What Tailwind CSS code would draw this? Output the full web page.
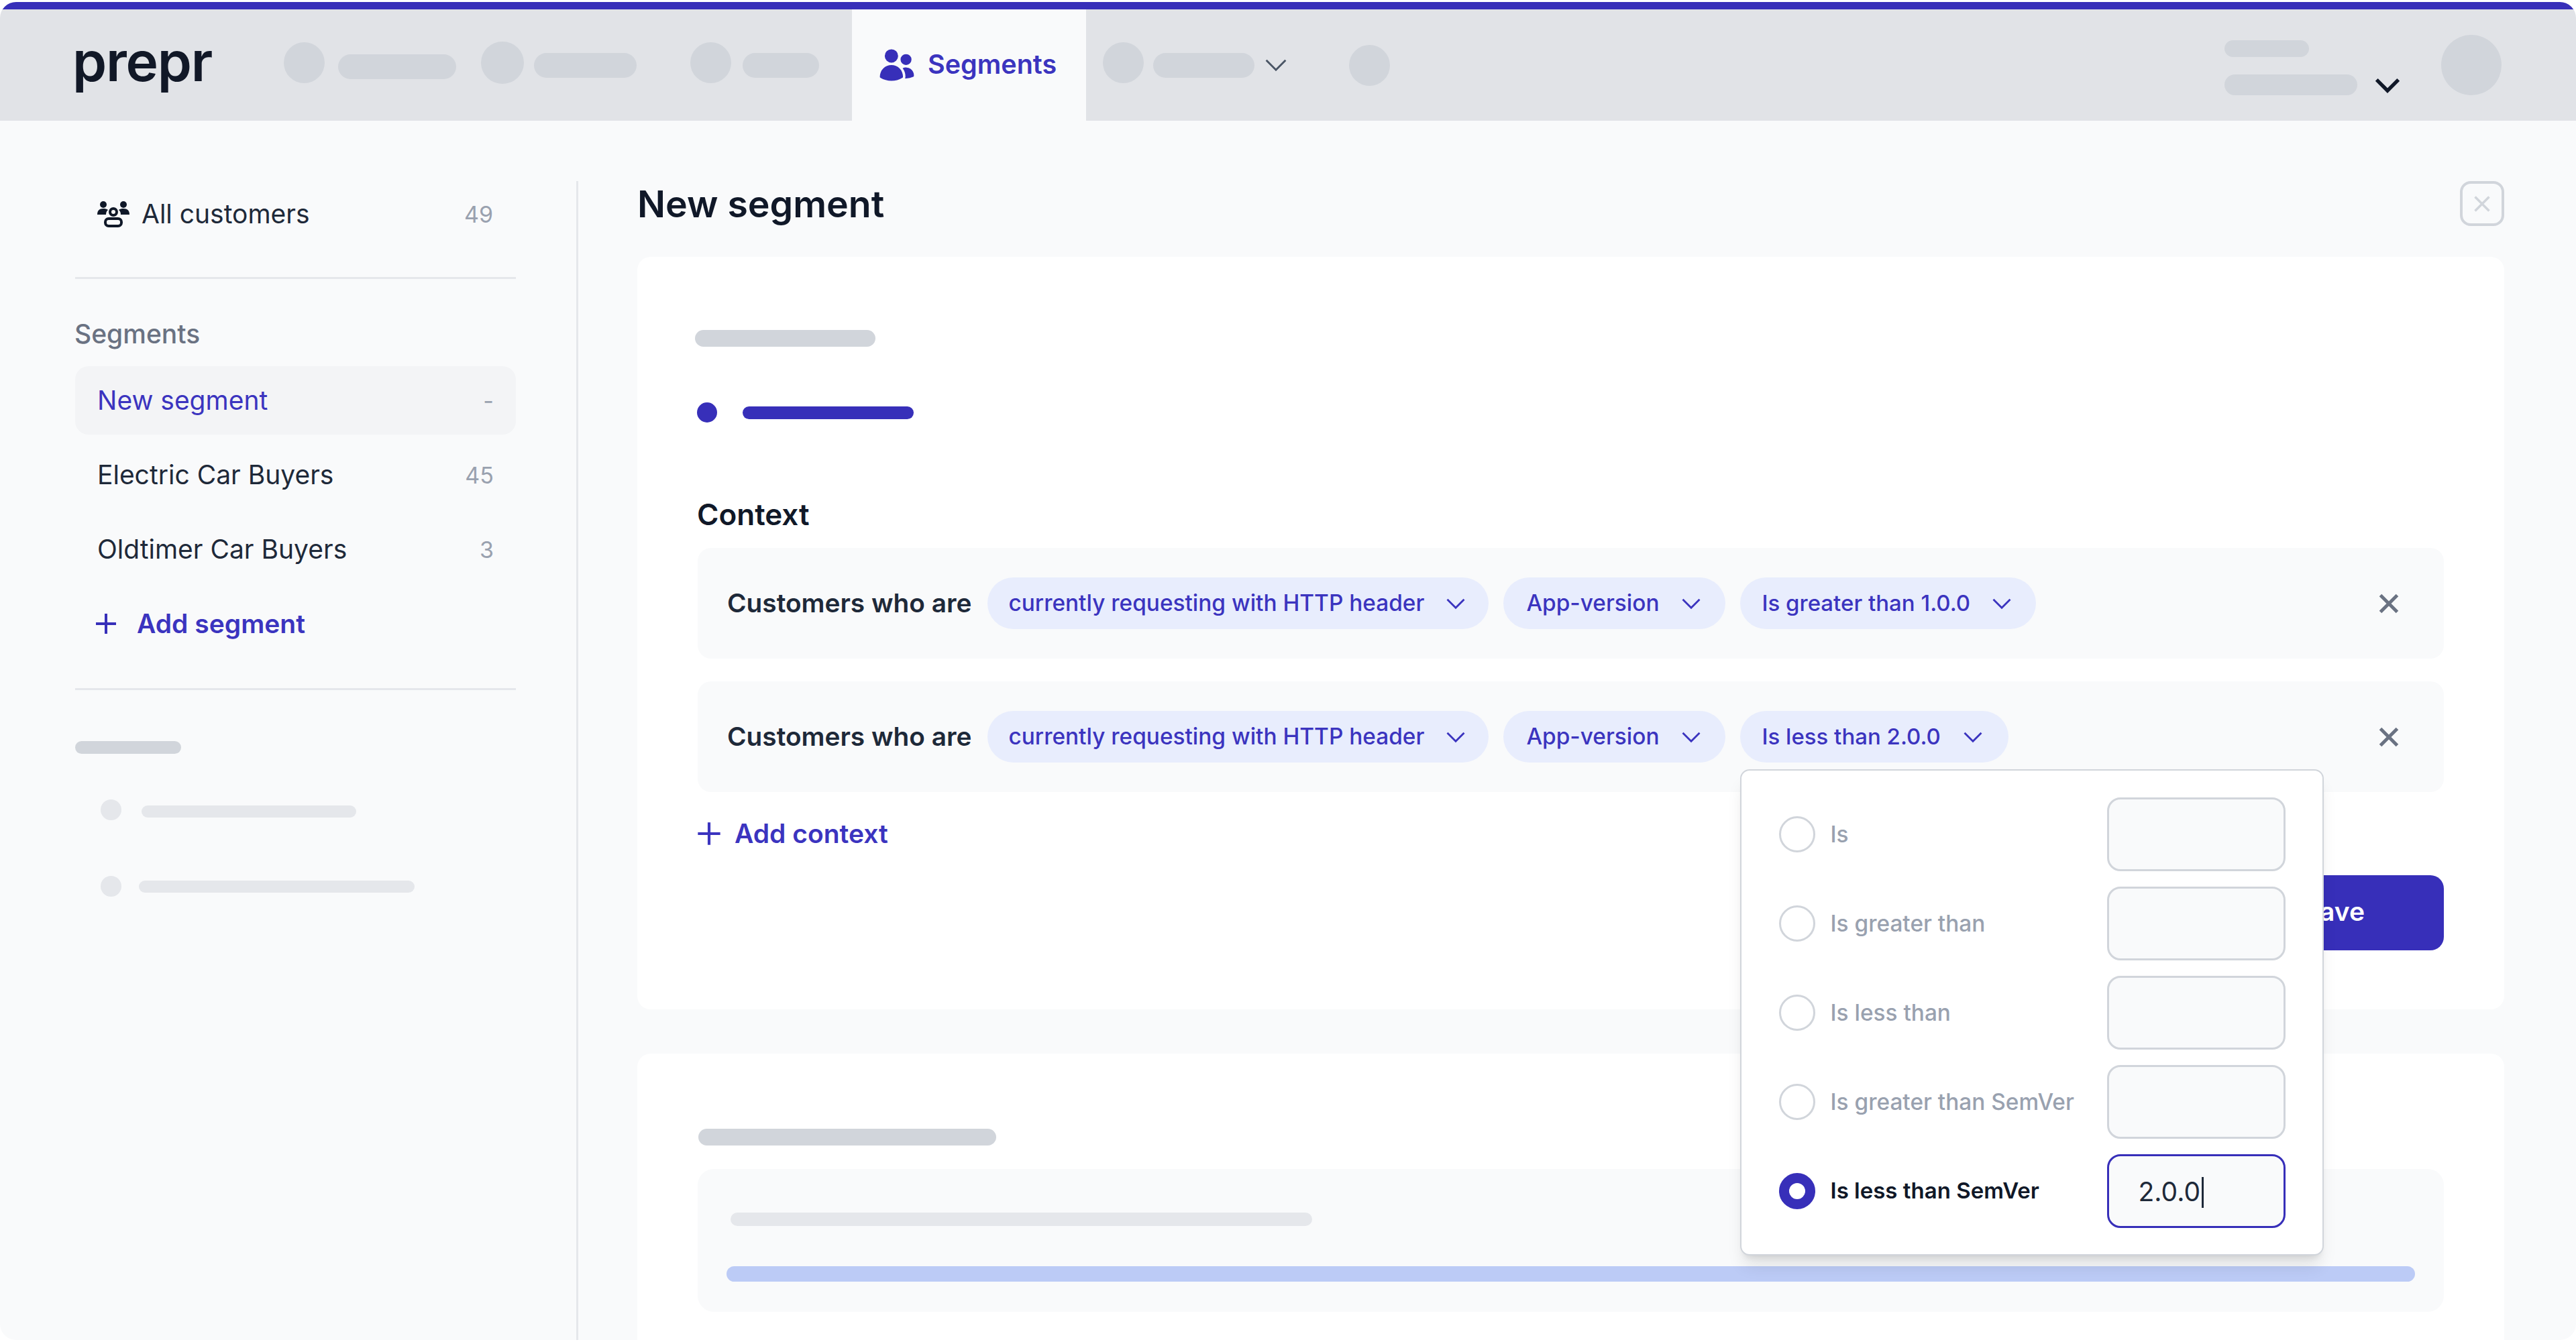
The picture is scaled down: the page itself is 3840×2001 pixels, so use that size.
<!DOCTYPE html>
<html lang="en">

<head>
  <meta charset="UTF-8" />
  <meta name="viewport" content="width=device-width, initial-scale=1" />
  <title>Prepr - New segment</title>
  <script src="https://cdn.jsdelivr.net/npm/@tailwindcss/browser@4"></script>
</head>

<body class="bg-white font-['Inter',sans-serif] text-gray-900 overflow-hidden">
  <div class="mt-[3px] h-[1995px] rounded-[24px] overflow-hidden bg-[#f9fafb] flex flex-col">
    <div class="h-[11px] shrink-0 bg-[#372fb9]"></div>

    <!-- top nav -->
    <header class="h-[166px] shrink-0 bg-[#e1e3e7] flex items-center">
      <div class="ml-[108px] w-[315px] -mt-[10px] text-[82px] leading-none font-semibold tracking-[-1.2px] text-[#111827]">prepr</div>
      <div class="-mt-[7px] w-[61px] h-[61px] rounded-full bg-[#d1d5db]"></div>
      <div class="mt-[5px] ml-[20px] w-[176px] h-[37px] rounded-full bg-[#d1d5db]"></div>
      <div class="-mt-[7px] ml-[37px] w-[64px] h-[63px] rounded-full bg-[#d1d5db]"></div>
      <div class="ml-[15px] w-[153px] h-[37px] rounded-full bg-[#d1d5db]"></div>
      <div class="-mt-[7px] ml-[80px] w-[61px] h-[61px] rounded-full bg-[#d1d5db]"></div>
      <div class="ml-[17px] w-[114px] h-[37px] rounded-full bg-[#d1d5db]"></div>

      <div class="ml-[49px] w-[349px] h-full bg-[#f9fafb] flex items-center pl-[38px] gap-[17px]">
        <svg class="w-[58px] h-[58px] text-[#372fb9]" viewBox="0 0 24 24" fill="currentColor">
          <path d="M4.5 6.375a4.125 4.125 0 1 1 8.25 0 4.125 4.125 0 0 1-8.25 0ZM14.25 8.625a3.375 3.375 0 1 1 6.75 0 3.375 3.375 0 0 1-6.75 0ZM1.5 19.125a7.125 7.125 0 0 1 14.25 0v.003l-.001.119a.75.75 0 0 1-.363.63 13.067 13.067 0 0 1-6.761 1.873c-2.472 0-4.786-.684-6.76-1.873a.75.75 0 0 1-.364-.63l-.001-.122ZM17.25 19.128l-.001.144a2.25 2.25 0 0 1-.233.96 10.088 10.088 0 0 0 5.06-1.01.75.75 0 0 0 .42-.643 4.875 4.875 0 0 0-6.957-4.611 8.586 8.586 0 0 1 1.71 5.157v.003Z" />
        </svg>
        <span class="text-[39.5px] font-semibold text-[#3b34bf]">Segments</span>
      </div>

      <div class="-mt-[7px] ml-[25px] w-[61px] h-[61px] rounded-full bg-[#d1d5db]"></div>
      <div class="ml-[14px] w-[151px] h-[37px] rounded-full bg-[#d1d5db]"></div>
      <svg class="ml-[9px] w-[46px] h-[46px] text-gray-600" viewBox="0 0 24 24" fill="none" stroke="currentColor" stroke-width="1.5">
        <path d="m19.5 8.25-7.5 7.5-7.5-7.5" />
      </svg>
      <div class="ml-[86px] w-[61px] h-[61px] rounded-full bg-[#d1d5db]"></div>

      <div class="ml-auto flex flex-col gap-[26px] mt-[8px]">
        <div class="w-[126px] h-[25px] rounded-full bg-[#d1d5db]"></div>
        <div class="w-[198px] h-[31px] rounded-full bg-[#d1d5db]"></div>
      </div>
      <svg class="ml-[19px] mt-[60px] w-[52px] h-[52px] text-gray-900" viewBox="0 0 24 24" fill="none" stroke="currentColor" stroke-width="2.5">
        <path d="m19.5 8.25-7.5 7.5-7.5-7.5" />
      </svg>
      <div class="ml-[54px] mr-[111px] w-[90px] h-[90px] rounded-full bg-[#d1d5db]"></div>
    </header>

    <div class="flex flex-1 min-h-0">
      <!-- sidebar -->
      <aside class="w-[859px] shrink-0 pl-[112px] pr-[90px] pt-[88px]">
        <div class="h-[102px] pl-[33px] pr-[34px] flex items-center justify-between">
          <div class="flex items-center gap-[18px]">
            <svg class="w-[48px] h-[40px] text-gray-900" viewBox="0 0 48 40" fill="currentColor">
              <circle cx="9" cy="6" r="5" />
              <circle cx="39" cy="6" r="5" />
              <path d="M0 21c0-6 3-9 9-9 3 0 5 .6 7 2-2 1.500-3 4-3 7Z" />
              <path d="M48 21c0-6-3-9-9-9-3 0-5 .6-7 2 2 1.500 3 4 3 7Z" />
              <circle cx="24" cy="17" r="5" fill="none" stroke="currentColor" stroke-width="4" />
              <rect x="12" y="27" width="24" height="11" rx="5" fill="none" stroke="currentColor" stroke-width="4" />
            </svg>
            <span class="text-[39px] text-gray-800">All customers</span>
          </div>
          <span class="text-[34px] text-gray-400">49</span>
        </div>

        <div class="mt-[43px] h-[3px] bg-gray-200"></div>

        <h3 class="mt-[52px] -ml-[1px] h-[60px] leading-[60px] text-[39px] font-medium text-gray-500">Segments</h3>

        <ul class="mt-[18px] flex flex-col gap-[9px]">
          <li class="h-[102px] px-[33px] rounded-[20px] bg-gray-100 flex items-center justify-between">
            <span class="text-[39px] text-[#3b34bf]">New segment</span>
            <span class="text-[34px] text-gray-400">-</span>
          </li>
          <li class="h-[102px] px-[33px] flex items-center justify-between">
            <span class="text-[39px] text-gray-800">Electric Car Buyers</span>
            <span class="text-[34px] text-gray-400">45</span>
          </li>
          <li class="h-[102px] px-[33px] flex items-center justify-between">
            <span class="text-[39px] text-gray-800">Oldtimer Car Buyers</span>
            <span class="text-[34px] text-gray-400">3</span>
          </li>
          <li class="h-[102px] pl-[22px] flex items-center gap-[22px]">
            <svg class="w-[48px] h-[48px] text-[#372fb9]" viewBox="0 0 24 24" fill="none" stroke="currentColor" stroke-width="2">
              <path d="M12 4.500v15m7.500-7.500h-15" />
            </svg>
            <span class="text-[39px] font-semibold text-[#3b34bf]">Add segment</span>
          </li>
        </ul>

        <div class="mt-[45px] h-[3px] bg-gray-200"></div>

        <div class="mt-[76px] w-[158px] h-[19px] rounded-full bg-[#d1d5db]"></div>
        <div class="mt-[68px] pl-[38px] flex items-center gap-[30px]">
          <div class="w-[31px] h-[31px] rounded-full bg-gray-200"></div>
          <div class="w-[320px] h-[18px] mt-[5px] rounded-full bg-gray-200"></div>
        </div>
        <div class="mt-[83px] pl-[38px] flex items-center gap-[26px]">
          <div class="w-[31px] h-[31px] rounded-full bg-gray-200"></div>
          <div class="w-[411px] h-[18px] rounded-full bg-gray-200"></div>
        </div>
      </aside>

      <div class="w-[3px] shrink-0 mt-[90px] bg-gray-200"></div>

      <!-- main -->
      <main class="flex-1 min-w-0 pl-[88px] pr-[107px] pt-[90px]">
        <div class="h-[67px] flex items-center justify-between">
          <h1 class="text-[55.4px] font-semibold text-gray-900">New segment</h1>
          <button class="w-[66px] h-[67px] rounded-[16px] border-[4px] border-[#d1d5db] flex items-center justify-center">
            <svg class="w-[42px] h-[42px] text-[#d1d5db]" viewBox="0 0 24 24" fill="none" stroke="currentColor" stroke-width="2">
              <path d="M6 18 18 6M6 6l12 12" />
            </svg>
          </button>
        </div>

        <section class="mt-[46px] h-[1122px] rounded-[20px] bg-white pt-[109px] px-[90px]">
          <div class="ml-[-4px] w-[269px] h-[25px] rounded-full bg-[#d1d5db]"></div>

          <div class="mt-[83px] flex items-center">
            <div class="-ml-[1px] w-[30px] h-[30px] rounded-full bg-[#372fb9]"></div>
            <div class="ml-[38px] w-[255px] h-[19px] rounded-full bg-[#372fb9]"></div>
          </div>

          <h2 class="mt-[107px] -ml-[1px] h-[60px] leading-[60px] text-[44px] font-semibold text-gray-900">Context</h2>

          <div class="mt-[20px] h-[165px] rounded-[20px] bg-[#f9fafb] pl-[44px] pr-[55px] flex items-center">
            <span class="mr-[24px] text-[38.8px] font-semibold text-gray-800">Customers who are</span>
            <div class="flex items-center gap-[22px]">
              <button class="h-[77px] pl-[31px] pr-[29px] rounded-full bg-[#e8edfd] flex items-center gap-[27px] text-[33.4px] font-medium text-[#3b34bf]">
                currently requesting with HTTP header
                <svg class="w-[40px] h-[40px]" viewBox="0 0 24 24" fill="none" stroke="currentColor" stroke-width="1.7"><path d="m19.5 8.250-7.500 7.500-7.500-7.500" /></svg>
              </button>
              <button class="h-[77px] pl-[34px] pr-[31px] rounded-full bg-[#e8edfd] flex items-center gap-[27px] text-[33.4px] font-medium text-[#3b34bf]">
                App-version
                <svg class="w-[40px] h-[40px]" viewBox="0 0 24 24" fill="none" stroke="currentColor" stroke-width="1.7"><path d="m19.5 8.250-7.500 7.500-7.500-7.500" /></svg>
              </button>
              <button class="h-[77px] pl-[33px] pr-[31px] rounded-full bg-[#e8edfd] flex items-center gap-[27px] text-[33px] font-medium text-[#3b34bf]">
                Is greater than 1.0.0
                <svg class="w-[40px] h-[40px]" viewBox="0 0 24 24" fill="none" stroke="currentColor" stroke-width="1.7"><path d="m19.5 8.250-7.500 7.500-7.500-7.500" /></svg>
              </button>
            </div>
            <svg class="ml-auto mr-[2px] w-[50px] h-[50px] text-gray-500" viewBox="0 0 24 24" fill="none" stroke="currentColor" stroke-width="2.4"><path d="M6 18 18 6M6 6l12 12" /></svg>
          </div>

          <div class="mt-[34px] h-[165px] rounded-[20px] bg-[#f9fafb] pl-[44px] pr-[55px] flex items-center">
            <span class="mr-[24px] text-[38.8px] font-semibold text-gray-800">Customers who are</span>
            <div class="flex items-center gap-[22px]">
              <button class="h-[77px] pl-[31px] pr-[29px] rounded-full bg-[#e8edfd] flex items-center gap-[27px] text-[33.4px] font-medium text-[#3b34bf]">
                currently requesting with HTTP header
                <svg class="w-[40px] h-[40px]" viewBox="0 0 24 24" fill="none" stroke="currentColor" stroke-width="1.7"><path d="m19.5 8.250-7.500 7.500-7.500-7.500" /></svg>
              </button>
              <button class="h-[77px] pl-[34px] pr-[31px] rounded-full bg-[#e8edfd] flex items-center gap-[27px] text-[33.4px] font-medium text-[#3b34bf]">
                App-version
                <svg class="w-[40px] h-[40px]" viewBox="0 0 24 24" fill="none" stroke="currentColor" stroke-width="1.7"><path d="m19.5 8.250-7.500 7.500-7.500-7.500" /></svg>
              </button>

              <!-- open dropdown -->
              <div class="relative">
                <button class="h-[77px] pl-[33px] pr-[33px] rounded-full bg-[#e8edfd] flex items-center gap-[28px] text-[33px] font-medium text-[#3b34bf]">
                  Is less than 2.0.0
                  <svg class="w-[40px] h-[40px]" viewBox="0 0 24 24" fill="none" stroke="currentColor" stroke-width="1.7"><path d="m19.5 8.250-7.500 7.500-7.500-7.500" /></svg>
                </button>
                <div class="absolute z-10 left-0 top-full mt-[10px] w-[870px] h-[725px] rounded-[14px] border-2 border-[#d1d5db] bg-white shadow-xl pt-[40px] pl-[56px] pr-[55px] flex flex-col gap-[23px]">
                  <div class="flex items-center justify-between h-[110px]">
                    <label class="flex items-center gap-[23px] text-[33.4px] font-medium text-gray-400"><span class="w-[54px] h-[54px] rounded-full border-[3px] border-[#d1d5db]"></span>Is</label>
                    <input class="w-[266px] h-[110px] rounded-[20px] border-[3px] border-[#d1d5db] bg-[#f9fafb]" />
                  </div>
                  <div class="flex items-center justify-between h-[110px]">
                    <label class="flex items-center gap-[23px] text-[33.4px] font-medium text-gray-400"><span class="w-[54px] h-[54px] rounded-full border-[3px] border-[#d1d5db]"></span>Is greater than</label>
                    <input class="w-[266px] h-[110px] rounded-[20px] border-[3px] border-[#d1d5db] bg-[#f9fafb]" />
                  </div>
                  <div class="flex items-center justify-between h-[110px]">
                    <label class="flex items-center gap-[23px] text-[33.4px] font-medium text-gray-400"><span class="w-[54px] h-[54px] rounded-full border-[3px] border-[#d1d5db]"></span>Is less than</label>
                    <input class="w-[266px] h-[110px] rounded-[20px] border-[3px] border-[#d1d5db] bg-[#f9fafb]" />
                  </div>
                  <div class="flex items-center justify-between h-[110px]">
                    <label class="flex items-center gap-[23px] text-[33.4px] font-medium text-gray-400"><span class="w-[54px] h-[54px] rounded-full border-[3px] border-[#d1d5db]"></span>Is greater than SemVer</label>
                    <input class="w-[266px] h-[110px] rounded-[20px] border-[3px] border-[#d1d5db] bg-[#f9fafb]" />
                  </div>
                  <div class="flex items-center justify-between h-[110px]">
                    <label class="flex items-center gap-[23px] text-[33px] font-semibold text-gray-900"><span class="w-[54px] h-[54px] rounded-full border-[15px] border-[#372fb9] bg-white"></span>Is less than SemVer</label>
                    <div class="w-[266px] h-[110px] rounded-[20px] border-[3px] border-[#372fb9] bg-[#f9fafb] pl-[44px] pt-[3px] flex items-center text-[39px] text-gray-800">2.0.0<span class="ml-[2px] w-[3px] h-[46px] bg-gray-800"></span></div>
                  </div>
                </div>
              </div>
            </div>
            <svg class="ml-auto mr-[2px] w-[50px] h-[50px] text-gray-500" viewBox="0 0 24 24" fill="none" stroke="currentColor" stroke-width="2.4"><path d="M6 18 18 6M6 6l12 12" /></svg>
          </div>

          <button class="mt-[37px] h-[50px] flex items-center gap-[18px] text-[39px] font-semibold text-[#3b34bf]">
            <svg class="-ml-[3px] w-[40px] h-[40px]" viewBox="0 0 24 24" fill="none" stroke="currentColor" stroke-width="2.500"><path d="M12 2v20M2 12h20" /></svg>
            Add context
          </button>

          <div class="mt-[37px] flex justify-end">
            <button class="h-[112px] px-[118px] pb-[3px] rounded-[20px] bg-[#372fb9] text-[39px] font-semibold text-white">Save</button>
          </div>
        </section>

        <section class="mt-[66px] h-[600px] rounded-[20px] bg-white pt-[112px] px-[90px]">
          <div class="ml-[1px] w-[444px] h-[25px] rounded-full bg-[#d1d5db]"></div>
          <div class="mt-[35px] h-[213px] rounded-[24px] bg-[#f9fafb] pt-[65px] pl-[43px] pr-[43px]">
            <div class="ml-[6px] w-[867px] h-[20px] rounded-full bg-gray-200"></div>
            <div class="mt-[60px] h-[23px] rounded-full bg-[#bccbf6]"></div>
          </div>
        </section>
      </main>
    </div>
  </div>
</body>

</html>
